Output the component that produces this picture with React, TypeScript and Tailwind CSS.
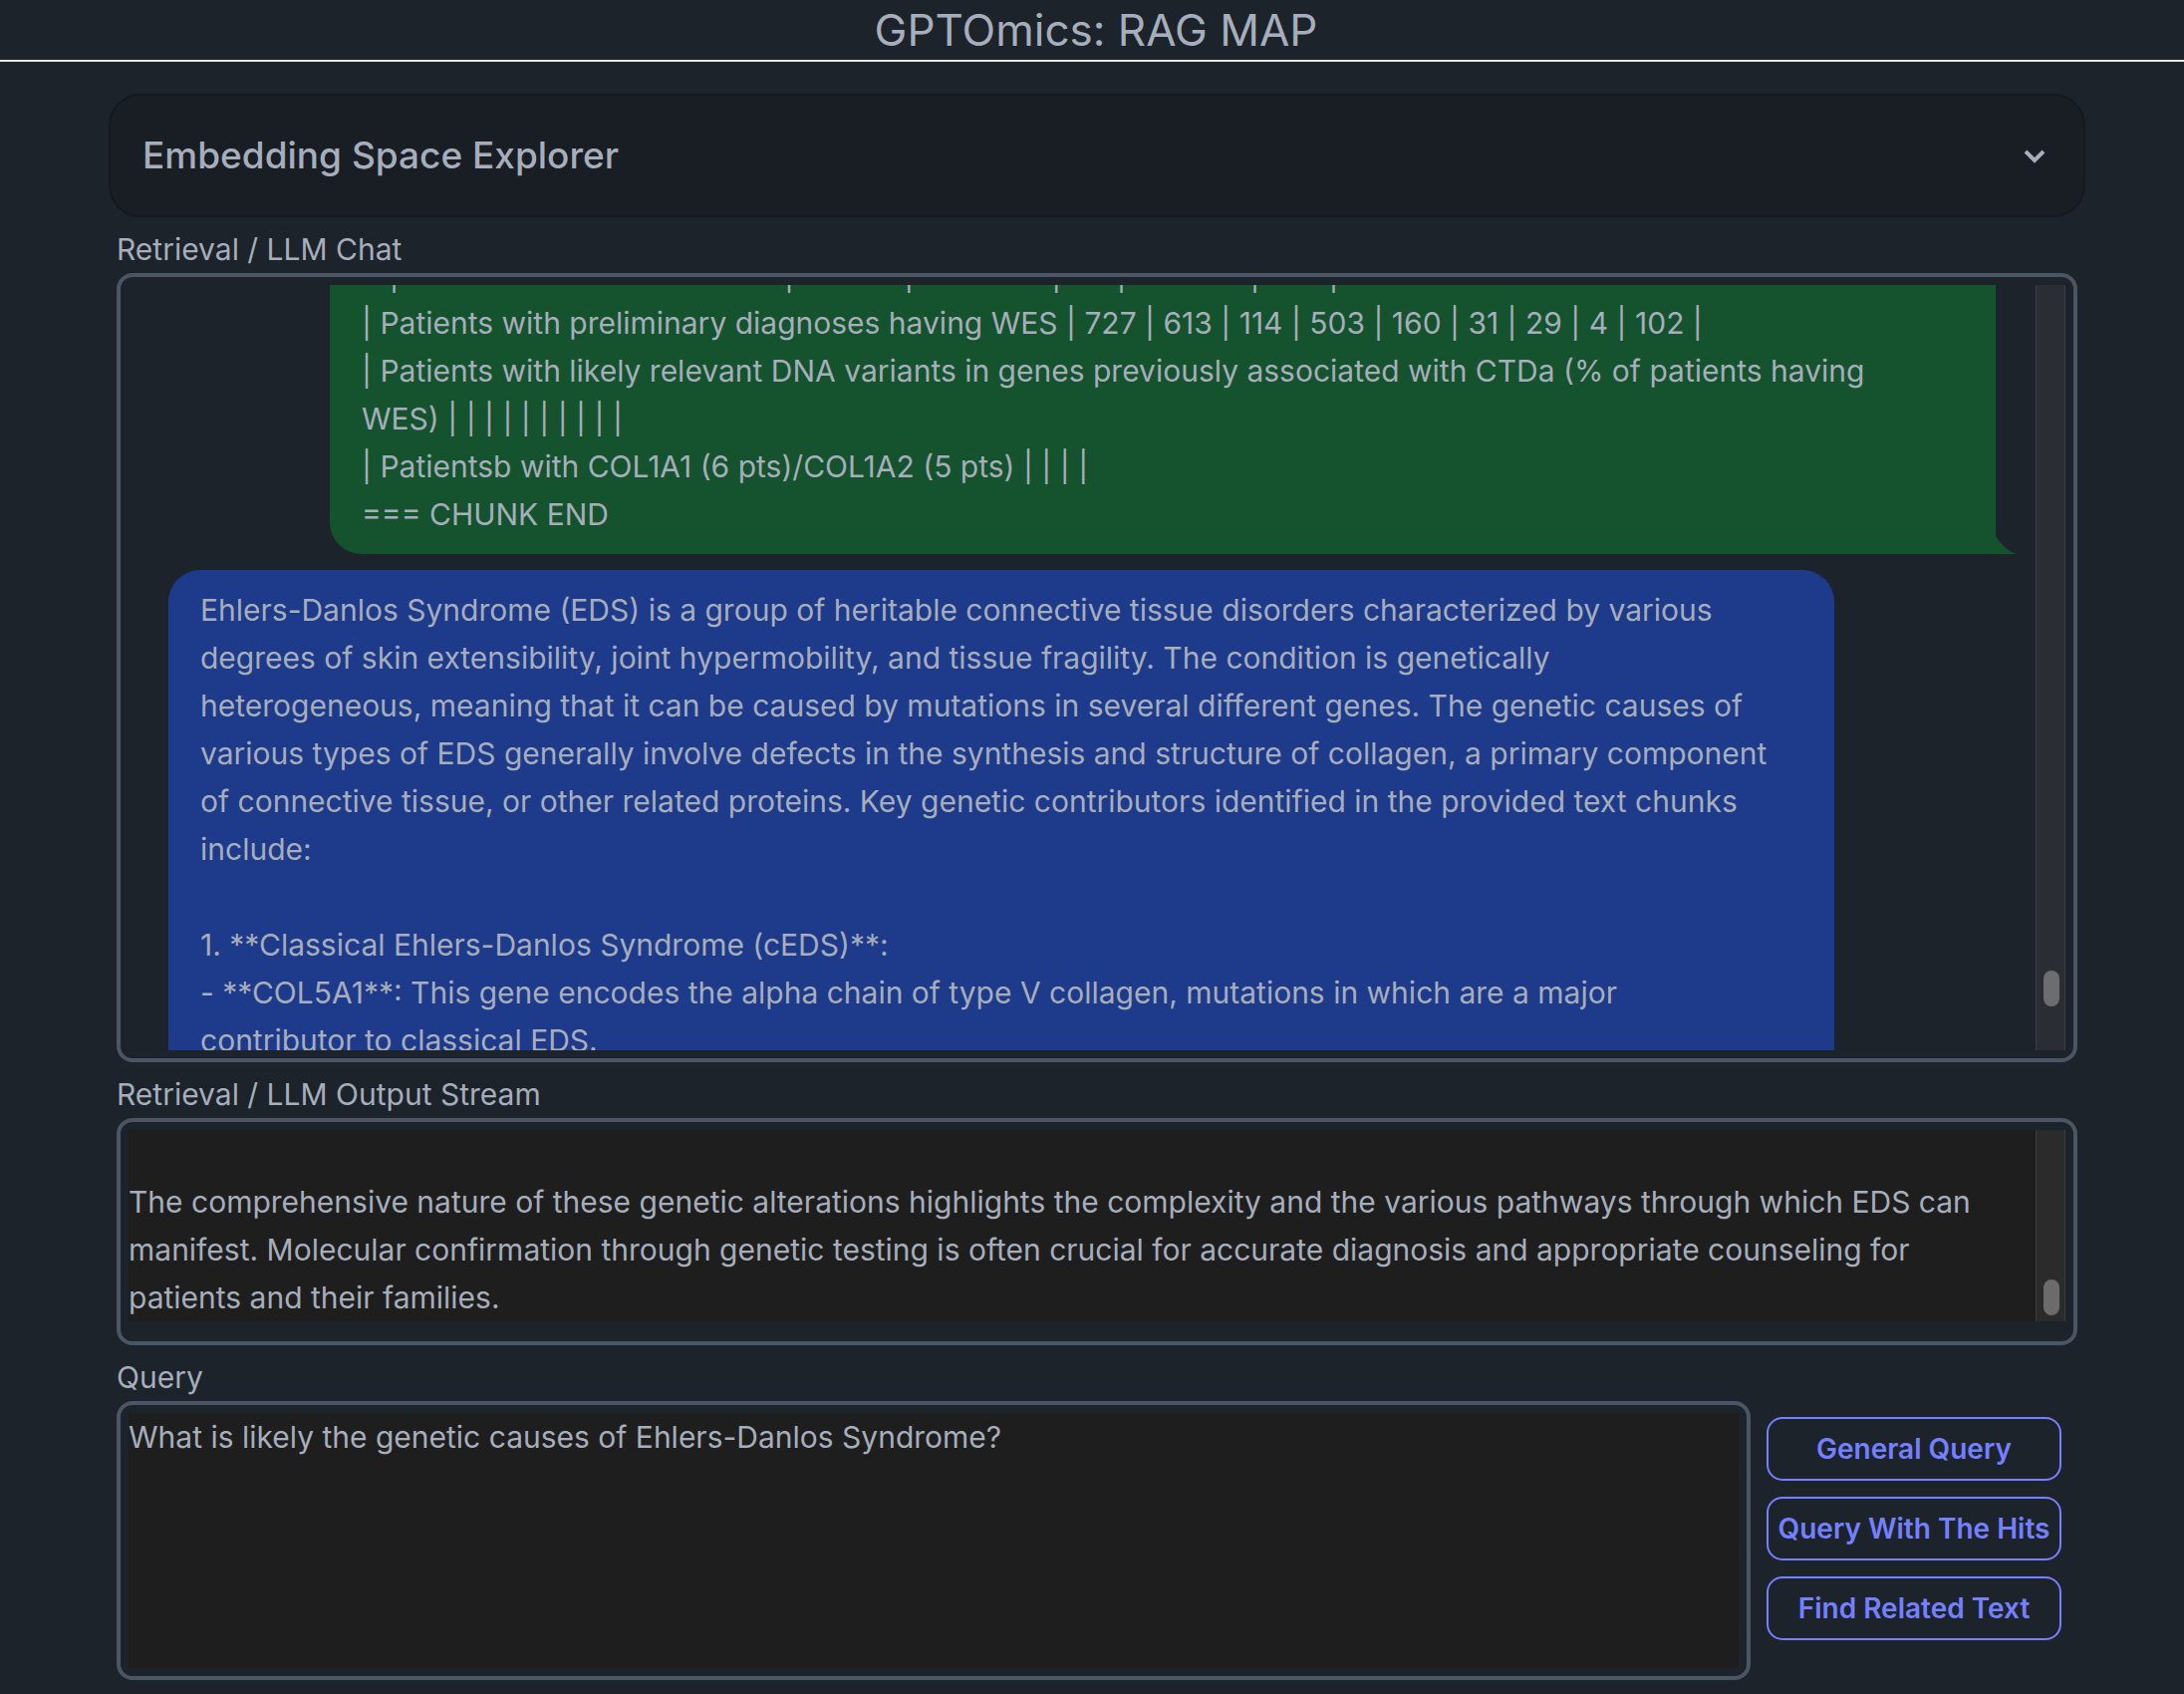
import { useEffect, useRef } from "react";

const retrieved = [
  "--|----------------------------|--------|----------|----|---------|-----|",
  "| Patients with preliminary diagnoses having WES | 727 | 613 | 114 | 503 | 160 | 31 | 29 | 4 | 102 |",
  "| Patients with likely relevant DNA variants in genes previously associated with CTDa (% of patients having",
  "WES) | | | | | | | | | |",
  "| Patientsb with COL1A1 (6 pts)/COL1A2 (5 pts) | | | |",
  "=== CHUNK END",
].join("\n");

const answer = [
  "Ehlers-Danlos Syndrome (EDS) is a group of heritable connective tissue disorders characterized by various",
  "degrees of skin extensibility, joint hypermobility, and tissue fragility. The condition is genetically",
  "heterogeneous, meaning that it can be caused by mutations in several different genes. The genetic causes of",
  "various types of EDS generally involve defects in the synthesis and structure of collagen, a primary component",
  "of connective tissue, or other related proteins. Key genetic contributors identified in the provided text chunks",
  "include:",
  "",
  "1. **Classical Ehlers-Danlos Syndrome (cEDS)**:",
  "- **COL5A1**: This gene encodes the alpha chain of type V collagen, mutations in which are a major",
  "contributor to classical EDS.",
].join("\n");

const stream = [
  "",
  "The comprehensive nature of these genetic alterations highlights the complexity and the various pathways through which EDS can",
  "manifest. Molecular confirmation through genetic testing is often crucial for accurate diagnosis and appropriate counseling for",
  "patients and their families.",
].join("\n");

const actions = ["General Query", "Query With The Hits", "Find Related Text"];

export default function App() {
  const chat = useRef<HTMLDivElement>(null);

  useEffect(() => {
    if (chat.current) chat.current.scrollTop = 50;
  }, []);

  return (
    <div className="min-h-screen bg-[#1d232a] font-['Inter',sans-serif] text-[30px] leading-[48px] text-[#a6adbb]">
      <header className="flex h-[62px] items-center justify-center border-b-2 border-gray-200 pl-2">
        <h1 className="text-[44px] leading-[60px]">GPTOmics: RAG MAP</h1>
      </header>

      <main className="pt-8 pr-[99px] pb-3 pl-[109px]">
        <button
          type="button"
          aria-expanded="false"
          className="flex h-[124px] w-full items-center justify-between rounded-[32px] border-2 border-[#15191e] bg-[#191e24] pr-[37px] pl-8 text-left"
        >
          <span className="text-[37px] font-medium">Embedding Space Explorer</span>
          <svg width="24" height="16" viewBox="0 0 24 16" fill="none" stroke="currentColor" strokeWidth="4" aria-hidden="true">
            <path d="M3 4 L12 13 L21 4" />
          </svg>
        </button>

        <div className="px-2">
          <section aria-labelledby="chat-label">
            <h2 id="chat-label" className="pt-2">Retrieval / LLM Chat</h2>
            <div className="flex rounded-2xl border-4 border-[#4b5563] p-2">
              <div ref={chat} className="flex h-[768px] min-w-0 flex-1 flex-col gap-4 overflow-y-auto px-10 [scrollbar-width:none]">
                <div className="relative ml-[162px] shrink-0 rounded-4xl rounded-br-none bg-[#14532d] px-8 py-4 whitespace-pre-wrap">
                  {retrieved}
                  <svg className="absolute bottom-0 left-full" width="22" height="18" viewBox="0 0 22 18" aria-hidden="true">
                    <path d="M0 0 C6 9 14 17 22 18 H0 Z" fill="#14532d" />
                  </svg>
                </div>
                <div className="mr-[162px] shrink-0 rounded-4xl rounded-bl-none bg-[#1e3a8a] px-8 py-4 whitespace-pre-wrap">
                  {answer}
                </div>
              </div>
              <div className="flex w-[30px] flex-col items-end justify-end border-x border-[#3b3d44] bg-[#2b2d35] pr-[5px] pb-11">
                <div className="h-9 w-4 rounded-full bg-[#6b6d71]" />
              </div>
            </div>
          </section>

          <section>
            <label htmlFor="stream" className="block pt-2">Retrieval / LLM Output Stream</label>
            <div className="flex rounded-2xl border-4 border-[#4b5563] p-2 pb-5">
              <textarea
                id="stream"
                readOnly
                value={stream}
                className="block h-48 min-w-0 flex-1 resize-none bg-[#1e1e1e] outline-none [scrollbar-width:none]"
              />
              <div className="mb-0 flex w-[30px] flex-col items-end justify-end border-x border-[#3c3c3c] bg-[#2b2b2b] pr-[5px] pb-1.5">
                <div className="h-9 w-4 rounded-full bg-[#6b6b6b]" />
              </div>
            </div>
          </section>

          <section>
            <label htmlFor="query" className="block pt-2">Query</label>
            <div className="flex gap-4">
              <div className="min-w-0 flex-1 rounded-2xl border-4 border-[#4b5563] p-2">
                <textarea
                  id="query"
                  defaultValue="What is likely the genetic causes of Ehlers-Danlos Syndrome?"
                  className="block h-64 w-full resize-none bg-[#1e1e1e] outline-none"
                />
              </div>
              <div className="mr-4 flex w-[296px] flex-col gap-4 pt-4">
                {actions.map((label) => (
                  <button
                    key={label}
                    type="button"
                    className="h-16 rounded-2xl border-2 border-[#7480ff] text-[28px] leading-8 font-semibold whitespace-nowrap text-[#7480ff]"
                  >
                    {label}
                  </button>
                ))}
              </div>
            </div>
          </section>
        </div>
      </main>
    </div>
  );
}
